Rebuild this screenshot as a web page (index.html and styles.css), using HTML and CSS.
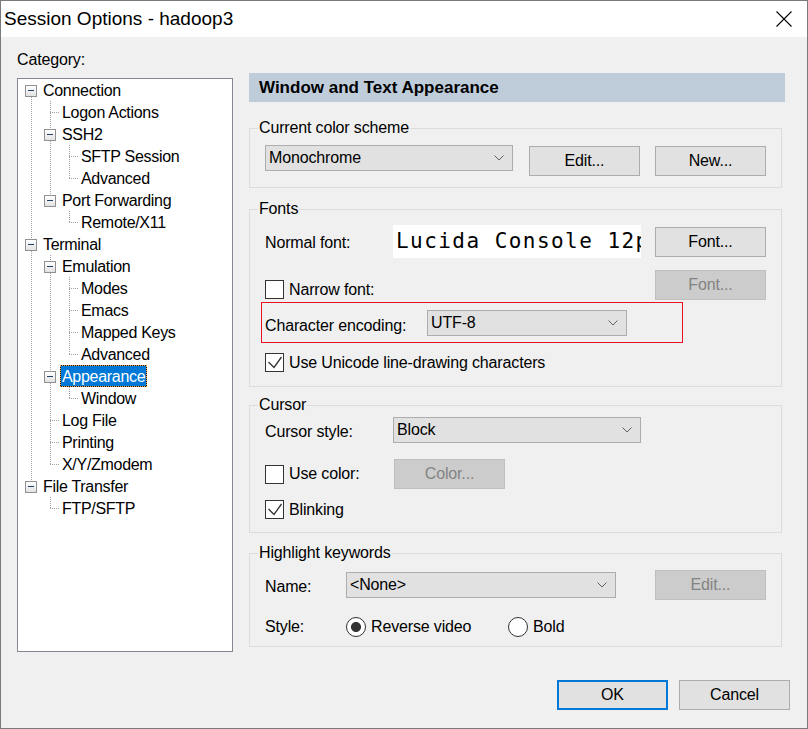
FILE: index.html
```html
<!DOCTYPE html>
<html>
<head>
<meta charset="utf-8">
<title>Session Options - hadoop3</title>
<link rel="stylesheet" href="styles.css">
</head>
<body>
<div class="window">
  <div class="titlebar">
    <span class="title">Session Options - hadoop3</span>
    <svg class="close" width="16" height="16" viewBox="0 0 16 16"><path d="M0.5 0.5 L15.5 15.5 M15.5 0.5 L0.5 15.5" stroke="#000" stroke-width="1.1" fill="none"/></svg>
  </div>
  <div class="main">
    <div class="left">
      <div class="category">Category:</div>
      <div class="tree">
        <div class="row"><span class="c x vb"><i class="box"></i></span><span class="lbl">Connection</span></div>
        <div class="row"><span class="c v"></span><span class="c t"></span><span class="lbl">Logon Actions</span></div>
        <div class="row"><span class="c v"></span><span class="c x vf"><i class="box"></i></span><span class="lbl">SSH2</span></div>
        <div class="row"><span class="c v"></span><span class="c v"></span><span class="c t"></span><span class="lbl">SFTP Session</span></div>
        <div class="row"><span class="c v"></span><span class="c v"></span><span class="c l"></span><span class="lbl">Advanced</span></div>
        <div class="row"><span class="c v"></span><span class="c x vt"><i class="box"></i></span><span class="lbl">Port Forwarding</span></div>
        <div class="row"><span class="c v"></span><span class="c"></span><span class="c l"></span><span class="lbl">Remote/X11</span></div>
        <div class="row"><span class="c x vf"><i class="box"></i></span><span class="lbl">Terminal</span></div>
        <div class="row"><span class="c v"></span><span class="c x vf"><i class="box"></i></span><span class="lbl">Emulation</span></div>
        <div class="row"><span class="c v"></span><span class="c v"></span><span class="c t"></span><span class="lbl">Modes</span></div>
        <div class="row"><span class="c v"></span><span class="c v"></span><span class="c t"></span><span class="lbl">Emacs</span></div>
        <div class="row"><span class="c v"></span><span class="c v"></span><span class="c t"></span><span class="lbl">Mapped Keys</span></div>
        <div class="row"><span class="c v"></span><span class="c v"></span><span class="c l"></span><span class="lbl">Advanced</span></div>
        <div class="row"><span class="c v"></span><span class="c x vf"><i class="box"></i></span><span class="lbl sel">Appearance</span></div>
        <div class="row"><span class="c v"></span><span class="c v"></span><span class="c l"></span><span class="lbl">Window</span></div>
        <div class="row"><span class="c v"></span><span class="c t"></span><span class="lbl">Log File</span></div>
        <div class="row"><span class="c v"></span><span class="c t"></span><span class="lbl">Printing</span></div>
        <div class="row"><span class="c v"></span><span class="c l"></span><span class="lbl">X/Y/Zmodem</span></div>
        <div class="row"><span class="c x vt"><i class="box"></i></span><span class="lbl">File Transfer</span></div>
        <div class="row"><span class="c"></span><span class="c l"></span><span class="lbl">FTP/SFTP</span></div>
      </div>
    </div>

    <div class="right">
      <div class="header">Window and Text Appearance</div>

      <fieldset class="grp grp1">
        <legend>Current color scheme</legend>
        <div class="gbody b1">
          <div class="frow r-scheme">
            <div class="combo w248"><span>Monochrome</span><svg class="arr" width="10" height="6" viewBox="0 0 10 6"><path d="M0.5 0.5 L5 5 L9.5 0.5" fill="none" stroke="#606060"/></svg></div>
            <button class="btn edit1">Edit...</button>
            <button class="btn new1">New...</button>
          </div>
        </div>
      </fieldset>

      <fieldset class="grp grp2">
        <legend>Fonts</legend>
        <div class="gbody b2">
          <div class="frow r-normal">
            <span class="lab col128">Normal font:</span>
            <div class="preview">Lucida Console 12pt</div>
            <button class="btn push">Font...</button>
          </div>
          <div class="frow r-narrow">
            <div class="chkline drop"><span class="chk"></span><span>Narrow font:</span></div>
            <button class="btn dis push">Font...</button>
          </div>
          <div class="frow r-enc">
            <span class="lab enc-lab">Character encoding:</span>
            <div class="combo w200"><span>UTF-8</span><svg class="arr" width="10" height="6" viewBox="0 0 10 6"><path d="M0.5 0.5 L5 5 L9.5 0.5" fill="none" stroke="#606060"/></svg></div>
          </div>
          <div class="frow r-uni">
            <div class="chkline"><span class="chk"><svg width="17" height="17" viewBox="0 0 17 17"><path d="M2.5 8 L8 13.5 L15.5 3" fill="none" stroke="#333" stroke-width="1.3"/></svg></span><span>Use Unicode line-drawing characters</span></div>
          </div>
        </div>
      </fieldset>

      <fieldset class="grp grp3">
        <legend>Cursor</legend>
        <div class="gbody b3">
          <div class="frow r-style">
            <span class="lab col128">Cursor style:</span>
            <div class="combo w248"><span>Block</span><svg class="arr" width="10" height="6" viewBox="0 0 10 6"><path d="M0.5 0.5 L5 5 L9.5 0.5" fill="none" stroke="#606060"/></svg></div>
          </div>
          <div class="frow r-color">
            <div class="chkline col129"><span class="chk"></span><span>Use color:</span></div>
            <button class="btn dis">Color...</button>
          </div>
          <div class="frow r-blink">
            <div class="chkline"><span class="chk"><svg width="17" height="17" viewBox="0 0 17 17"><path d="M2.5 8 L8 13.5 L15.5 3" fill="none" stroke="#333" stroke-width="1.3"/></svg></span><span>Blinking</span></div>
          </div>
        </div>
      </fieldset>

      <fieldset class="grp grp4">
        <legend>Highlight keywords</legend>
        <div class="gbody b4">
          <div class="frow r-name">
            <span class="lab col81">Name:</span>
            <div class="combo w270"><span>&lt;None&gt;</span><svg class="arr" width="10" height="6" viewBox="0 0 10 6"><path d="M0.5 0.5 L5 5 L9.5 0.5" fill="none" stroke="#606060"/></svg></div>
            <button class="btn dis push">Edit...</button>
          </div>
          <div class="frow r-hstyle">
            <span class="lab col81 nopad">Style:</span>
            <div class="radioline col162"><span class="radio on"></span><span>Reverse video</span></div>
            <div class="radioline"><span class="radio"></span><span>Bold</span></div>
          </div>
        </div>
      </fieldset>
    </div>
  </div>
  <div class="footer">
    <button class="btn ok">OK</button>
    <button class="btn">Cancel</button>
  </div>
</div>
</body>
</html>
```

FILE: styles.css
```css
html, body {
  margin: 0;
  padding: 0;
  background: #ffffff;
}

.window {
  width: 808px;
  height: 729px;
  box-sizing: border-box;
  border: 1px solid #7a7a7a;
  background: #f0f0f0;
  display: flex;
  flex-direction: column;
  font-family: "Liberation Sans", Arial, sans-serif;
  font-size: 16px;
  letter-spacing: -0.15px;
  color: #000;
  overflow: hidden;
}

/* title bar */
.titlebar {
  height: 36px;
  flex: none;
  background: #ffffff;
  display: flex;
  align-items: center;
  justify-content: space-between;
  padding: 0 15px 0 3px;
}
.title {
  font-size: 19px;
  letter-spacing: 0;
  line-height: 24px;
}
.close {
  display: block;
}

/* main area */
.main {
  display: flex;
  gap: 16px;
  padding-left: 16px;
  flex: none;
}
.left {
  width: 216px;
  padding-top: 13px;
}
.category {
  line-height: 20px;
  height: 20px;
}

/* tree */
.tree {
  margin-top: 8px;
  height: 574px;
  box-sizing: border-box;
  border: 1px solid #828790;
  background: #ffffff;
  padding-left: 3px;
  letter-spacing: -0.3px;
}
.row {
  display: flex;
  height: 22px;
}
.c {
  flex: none;
  width: 19px;
  height: 22px;
  background-repeat: no-repeat;
}
.c.v {
  background-image: repeating-linear-gradient(to bottom, #a0a0a0 0 1px, transparent 1px 2px);
  background-position: 10px 0;
  background-size: 1px 22px;
}
.c.t {
  background-image: repeating-linear-gradient(to right, #a0a0a0 0 1px, transparent 1px 2px),
                    repeating-linear-gradient(to bottom, #a0a0a0 0 1px, transparent 1px 2px);
  background-position: 10px 11px, 10px 0;
  background-size: 9px 1px, 1px 22px;
}
.c.l {
  background-image: repeating-linear-gradient(to right, #a0a0a0 0 1px, transparent 1px 2px),
                    repeating-linear-gradient(to bottom, #a0a0a0 0 1px, transparent 1px 2px);
  background-position: 10px 11px, 10px 0;
  background-size: 9px 1px, 1px 12px;
}
.c.x.vf {
  background-image: repeating-linear-gradient(to bottom, #a0a0a0 0 1px, transparent 1px 2px);
  background-position: 10px 0;
  background-size: 1px 22px;
}
.c.x.vt {
  background-image: repeating-linear-gradient(to bottom, #a0a0a0 0 1px, transparent 1px 2px);
  background-position: 10px 0;
  background-size: 1px 11px;
}
.c.x.vb {
  background-image: repeating-linear-gradient(to bottom, #a0a0a0 0 1px, transparent 1px 2px);
  background-position: 10px 12px;
  background-size: 1px 10px;
}
.box {
  display: block;
  width: 12px;
  height: 12px;
  margin: 6px 0 0 4px;
  box-sizing: border-box;
  border: 1px solid #919191;
  background:
    linear-gradient(#1f3f6a, #1f3f6a) 2px 4px / 6px 1px no-repeat,
    linear-gradient(#ffffff, #e2e2e2);
}
.lbl {
  margin-left: 1px;
  padding: 0 2px;
  height: 22px;
  line-height: 23px;
  white-space: nowrap;
}
.lbl.sel {
  background: #0078d7;
  color: #ffffff;
  box-shadow: inset 0 0 0 1px #1a1a1a;
  outline: 1px dotted #f2a04a;
  outline-offset: -1px;
}

/* right column */
.right {
  width: 536px;
  padding-top: 36px;
}
.header {
  height: 29px;
  background: #bfcddb;
  font-weight: bold;
  font-size: 17px;
  letter-spacing: 0;
  line-height: 29px;
  padding-left: 10px;
}

.grp {
  margin: 0;
  padding: 0;
  width: 533px;
  box-sizing: border-box;
  border: 1px solid #dcdcdc;
  min-width: 0;
}
.grp legend {
  margin-left: 8px;
  padding: 0 1px;
  line-height: 20px;
  height: 20px;
}
.grp1 { margin-top: 16px; }
.grp2 { margin-top: 11px; }
.grp3 { margin-top: 8px; }
.grp4 { margin-top: 10px; }

.gbody {
  padding: 0 15px;
}
.b1 { padding-top: 7px; padding-bottom: 11px; }
.b2 { padding-top: 6px; padding-bottom: 13px; }
.b3 { padding-top: 2px; padding-bottom: 13px; }
.b4 { padding-top: 7px; padding-bottom: 9px; }

.frow {
  display: flex;
  align-items: center;
}
.r-scheme { height: 31px; align-items: flex-start; }

.r-normal { height: 33px; }
.r-narrow { height: 30px; margin-top: 12px; align-items: flex-end; }
.r-enc {
  height: 39px;
  margin-top: 2px;
  margin-left: -4px;
  padding-left: 3px;
  box-sizing: content-box;
  border: 1px solid #e81123;
  width: 417px;
}
.r-uni { height: 20px; margin-top: 10px; align-items: flex-start; }

.r-style { height: 26px; }
.r-color { height: 30px; margin-top: 16px; }
.r-blink { height: 19px; margin-top: 11px; }

.r-name { height: 30px; }
.r-hstyle { height: 20px; margin-top: 17px; }

.lab {
  flex: none;
  line-height: 20px;
  padding-top: 3px;
  white-space: nowrap;
}
.lab.nopad { padding-top: 0; }
.enc-lab { width: 162px; padding-top: 6px; }
.col128 { width: 128px; flex: none; }
.col129 { width: 129px; flex: none; }
.col81 { width: 81px; flex: none; }
.col162 { width: 162px; flex: none; }

/* combo */
.combo {
  flex: none;
  display: flex;
  align-items: center;
  justify-content: space-between;
  height: 26px;
  box-sizing: border-box;
  border: 1px solid #adadad;
  background: #e1e1e1;
  padding: 0 8px 0 3px;
  white-space: nowrap;
}
.arr { display: block; flex: none; }
.w248 { width: 248px; }
.w200 { width: 200px; }
.w270 { width: 270px; }

/* buttons */
.btn {
  flex: none;
  width: 111px;
  height: 30px;
  box-sizing: border-box;
  border: 1px solid #adadad;
  background: #e1e1e1;
  color: #000;
  font: inherit;
  letter-spacing: inherit;
  padding: 0;
  margin: 0;
}
.btn.dis {
  background: #cccccc;
  border-color: #bfbfbf;
  color: #838383;
}
.btn.ok {
  border: 2px solid #0078d7;
}
.btn.push { margin-left: auto; }
.btn.edit1 { margin-left: 16px; margin-top: 1px; }
.btn.new1 { margin-left: 15px; margin-top: 1px; }

/* preview */
.preview {
  flex: none;
  width: 248px;
  height: 33px;
  background: #ffffff;
  overflow: hidden;
  white-space: nowrap;
  font-family: "DejaVu Sans Mono", "Liberation Mono", monospace;
  font-size: 21px;
  letter-spacing: 1.45px;
  line-height: 33px;
  padding-left: 3px;
  box-sizing: border-box;
}

/* check boxes and radios */
.chkline {
  display: flex;
  align-items: center;
  gap: 5px;
  height: 19px;
  white-space: nowrap;
}
.chkline.drop { margin-bottom: 1px; }
.chk {
  flex: none;
  width: 19px;
  height: 19px;
  box-sizing: border-box;
  border: 1px solid #333333;
  background: #ffffff;
}
.chk svg { display: block; }

.radioline {
  display: flex;
  align-items: center;
  gap: 5px;
  white-space: nowrap;
}
.radio {
  flex: none;
  width: 20px;
  height: 20px;
  box-sizing: border-box;
  border: 1px solid #333333;
  border-radius: 50%;
  background: #ffffff;
}
.radio.on {
  background: radial-gradient(circle, #333333 0 4.6px, #ffffff 5.4px);
}

/* footer */
.footer {
  display: flex;
  justify-content: flex-end;
  gap: 11px;
  padding: 28px 17px 0 0;
}
```
